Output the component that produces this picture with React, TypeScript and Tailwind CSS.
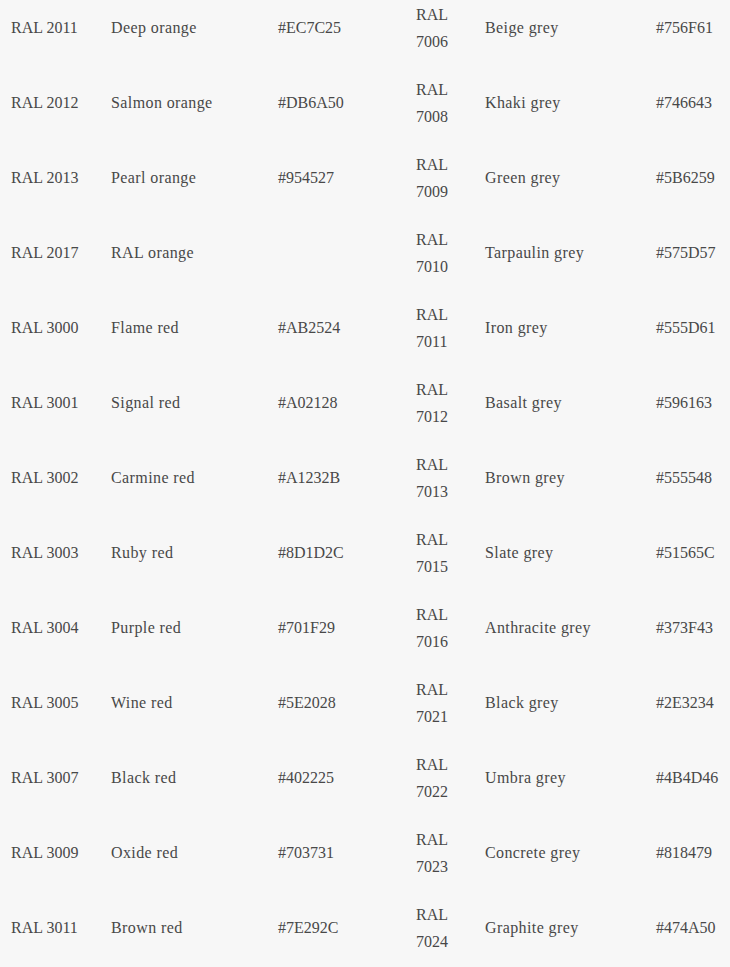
import React from 'react';

type Row = [string, string, string];

const left: Row[] = [
  ['RAL 2011', 'Deep orange', '#EC7C25'],
  ['RAL 2012', 'Salmon orange', '#DB6A50'],
  ['RAL 2013', 'Pearl orange', '#954527'],
  ['RAL 2017', 'RAL orange', ''],
  ['RAL 3000', 'Flame red', '#AB2524'],
  ['RAL 3001', 'Signal red', '#A02128'],
  ['RAL 3002', 'Carmine red', '#A1232B'],
  ['RAL 3003', 'Ruby red', '#8D1D2C'],
  ['RAL 3004', 'Purple red', '#701F29'],
  ['RAL 3005', 'Wine red', '#5E2028'],
  ['RAL 3007', 'Black red', '#402225'],
  ['RAL 3009', 'Oxide red', '#703731'],
  ['RAL 3011', 'Brown red', '#7E292C'],
];

const right: Row[] = [
  ['RAL 7006', 'Beige grey', '#756F61'],
  ['RAL 7008', 'Khaki grey', '#746643'],
  ['RAL 7009', 'Green grey', '#5B6259'],
  ['RAL 7010', 'Tarpaulin grey', '#575D57'],
  ['RAL 7011', 'Iron grey', '#555D61'],
  ['RAL 7012', 'Basalt grey', '#596163'],
  ['RAL 7013', 'Brown grey', '#555548'],
  ['RAL 7015', 'Slate grey', '#51565C'],
  ['RAL 7016', 'Anthracite grey', '#373F43'],
  ['RAL 7021', 'Black grey', '#2E3234'],
  ['RAL 7022', 'Umbra grey', '#4B4D46'],
  ['RAL 7023', 'Concrete grey', '#818479'],
  ['RAL 7024', 'Graphite grey', '#474A50'],
];

export default function App() {
  return (
    <div className="min-h-[967px] w-[730px] overflow-hidden bg-[#f7f7f7] text-[#484848] text-[16px] leading-[27px] [font-family:'Liberation_Serif',serif]">
      <div className="-mt-[10px]">
        {left.map((l, i) => {
          const r = right[i];
          return (
            <div
              key={l[0]}
              className="grid h-[75px] grid-cols-[100px_167px_138px_69px_171px_85px] items-center"
            >
              <div className="pl-[11px]">{l[0]}</div>
              <div className="pl-[11px] tracking-[0.4px]">{l[1]}</div>
              <div className="pl-[11px]">{l[2]}</div>
              <div className="pl-[11px] pr-[4px]">
                <div>RAL</div>
                <div>{r[0].replace('RAL ', '')}</div>
              </div>
              <div className="pl-[11px] tracking-[0.4px]">{r[1]}</div>
              <div className="pl-[11px] whitespace-nowrap">{r[2]}</div>
            </div>
          );
        })}
      </div>
    </div>
  );
}
